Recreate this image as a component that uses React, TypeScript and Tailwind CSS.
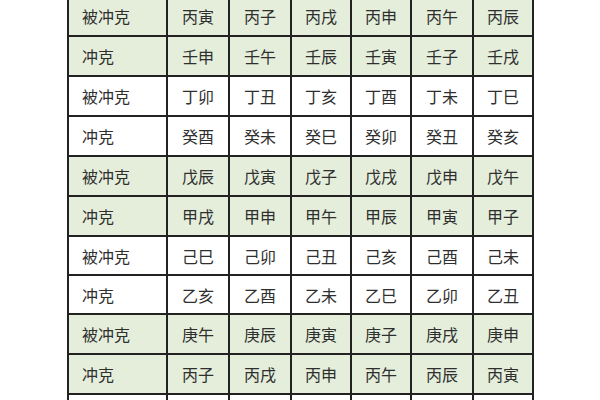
const rows = [
  { label: "被冲克", cells: ["丙寅", "丙子", "丙戌", "丙申", "丙午", "丙辰"], green: true, h: "h-[40px]" },
  { label: "冲克", cells: ["壬申", "壬午", "壬辰", "壬寅", "壬子", "壬戌"], green: true, h: "h-[40px]" },
  { label: "被冲克", cells: ["丁卯", "丁丑", "丁亥", "丁酉", "丁未", "丁巳"], green: false, h: "h-[40px]" },
  { label: "冲克", cells: ["癸酉", "癸未", "癸巳", "癸卯", "癸丑", "癸亥"], green: false, h: "h-[40px]" },
  { label: "被冲克", cells: ["戊辰", "戊寅", "戊子", "戊戌", "戊申", "戊午"], green: true, h: "h-[40px]" },
  { label: "冲克", cells: ["甲戌", "甲申", "甲午", "甲辰", "甲寅", "甲子"], green: true, h: "h-[40px]" },
  { label: "被冲克", cells: ["己巳", "己卯", "己丑", "己亥", "己酉", "己未"], green: false, h: "h-[39px]" },
  { label: "冲克", cells: ["乙亥", "乙酉", "乙未", "乙巳", "乙卯", "乙丑"], green: false, h: "h-[39px]" },
  { label: "被冲克", cells: ["庚午", "庚辰", "庚寅", "庚子", "庚戌", "庚申"], green: true, h: "h-[40px]" },
  { label: "冲克", cells: ["丙子", "丙戌", "丙申", "丙午", "丙辰", "丙寅"], green: true, h: "h-[40px]" },
  { label: "", cells: ["", "", "", "", "", ""], green: false, h: "h-[40px]" },
];

// widths include the right border of each cell
const widths = ["w-[62px]", "w-[62px]", "w-[60px]", "w-[60px]", "w-[62px]", "w-[58px]"];

export default function App() {
  return (
    <div
      className="h-[400px] w-[600px] overflow-hidden bg-white text-[16px] text-[#2f2f2f]"
      style={{ fontFamily: '"Noto Sans CJK SC", "Noto Sans", sans-serif' }}
    >
      <div className="ml-[67px] mt-[-3px] w-[467px] border-x-2 border-[#222]">
        {rows.map((row, i) => (
          <div
            key={i}
            className={`flex ${row.h} border-b-2 border-[#222] ${row.green ? "bg-[#e4eedb]" : "bg-white"}`}
          >
            <div className="flex w-[99px] items-center border-r-2 border-[#222] pl-[13px]">{row.label}</div>
            {row.cells.map((c, j) => (
              <div
                key={j}
                className={`flex ${widths[j]} items-center justify-center ${j < 5 ? "border-r-2 border-[#222]" : ""}`}
              >
                {c}
              </div>
            ))}
          </div>
        ))}
      </div>
    </div>
  );
}
